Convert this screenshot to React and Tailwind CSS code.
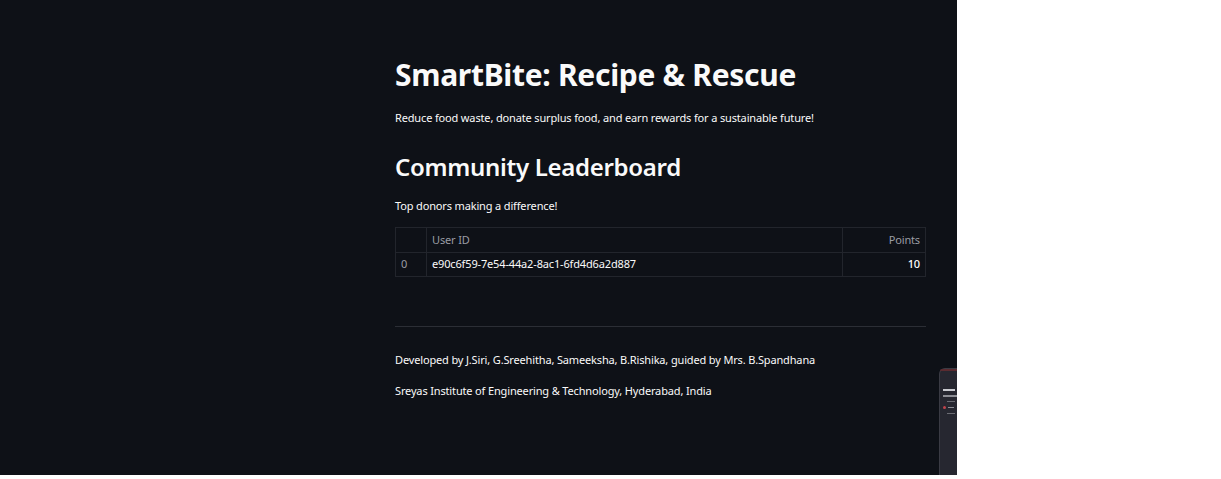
export default function App() {
  return (
    <div className="w-[1221px] h-[479px] bg-white overflow-hidden">
      <div className="relative w-[957px] h-[475px] bg-[#0e1117] overflow-hidden text-[#fafafa] font-['Noto_Sans',sans-serif]">
        <div className="pl-[395px] pr-[31px] pt-[54px]">
          <h1 className="text-[30px] leading-[42px] font-bold tracking-[-0.3px]">SmartBite: Recipe &amp; Rescue</h1>
          <p className="mt-[14px] text-[11px] leading-[16px] tracking-[-0.15px]">Reduce food waste, donate surplus food, and earn rewards for a sustainable future!</p>
          <h2 className="mt-[24px] text-[24px] leading-[34px] font-semibold tracking-[-0.3px]">Community Leaderboard</h2>
          <p className="mt-[14px] text-[11px] leading-[16px] tracking-[-0.15px]">Top donors making a difference!</p>
          <table className="mt-[13px] w-full border-collapse text-[11px] tracking-[-0.15px]">
            <thead>
              <tr className="h-[25px]">
                <th className="w-[31px] border border-[#22252c] font-normal"></th>
                <th className="border border-[#22252c] text-left font-normal text-[#9a9ca3] pl-[5px]">User ID</th>
                <th className="w-[83px] border border-[#22252c] text-right font-normal text-[#9a9ca3] pr-[5px]">Points</th>
              </tr>
            </thead>
            <tbody>
              <tr className="h-[24px]">
                <td className="border border-[#22252c] text-[#9a9ca3] pl-[5px]">0</td>
                <td className="border border-[#22252c] text-[#fafafa] pl-[5px]">e90c6f59-7e54-44a2-8ac1-6fd4d6a2d887</td>
                <td className="border border-[#22252c] text-right text-[#ffffff] font-medium pr-[5px]">10</td>
              </tr>
            </tbody>
          </table>
          <div className="mt-[49px] h-px bg-[#2b2e35]"></div>
          <p className="mt-[25px] text-[11px] leading-[16px] tracking-[-0.15px]">Developed by J.Siri, G.Sreehitha, Sameeksha, B.Rishika, guided by Mrs. B.Spandhana</p>
          <p className="mt-[15px] text-[11px] leading-[16px] tracking-[-0.15px]">Sreyas Institute of Engineering &amp; Technology, Hyderabad, India</p>
        </div>
        <div className="absolute left-[939px] top-[368px] w-[60px] h-[120px] rounded-tl-[6px] bg-[#262730] border-l border-t border-[#3a3b44]">
          <div className="absolute left-0 right-0 top-0 h-[2px] bg-[#5a2b30] rounded-tl-[6px]"></div>
          <div className="pl-[3px] pt-[20px] flex flex-col gap-[4px]">
            <div className="w-[12px] h-[2px] bg-[#c9cad0]"></div>
            <div className="w-[14px] h-[2px] bg-[#8d8e95]"></div>
            <div className="ml-[4px] w-[8px] h-[1px] bg-[#6b6c73]"></div>
            <div className="flex items-center gap-[2px]"><div className="w-[3px] h-[3px] rounded-full bg-[#c0444c]"></div><div className="w-[6px] h-[1px] bg-[#8d8e95]"></div></div>
            <div className="ml-[4px] w-[8px] h-[1px] bg-[#6b6c73]"></div>
          </div>
        </div>
      </div>
    </div>
  );
}
